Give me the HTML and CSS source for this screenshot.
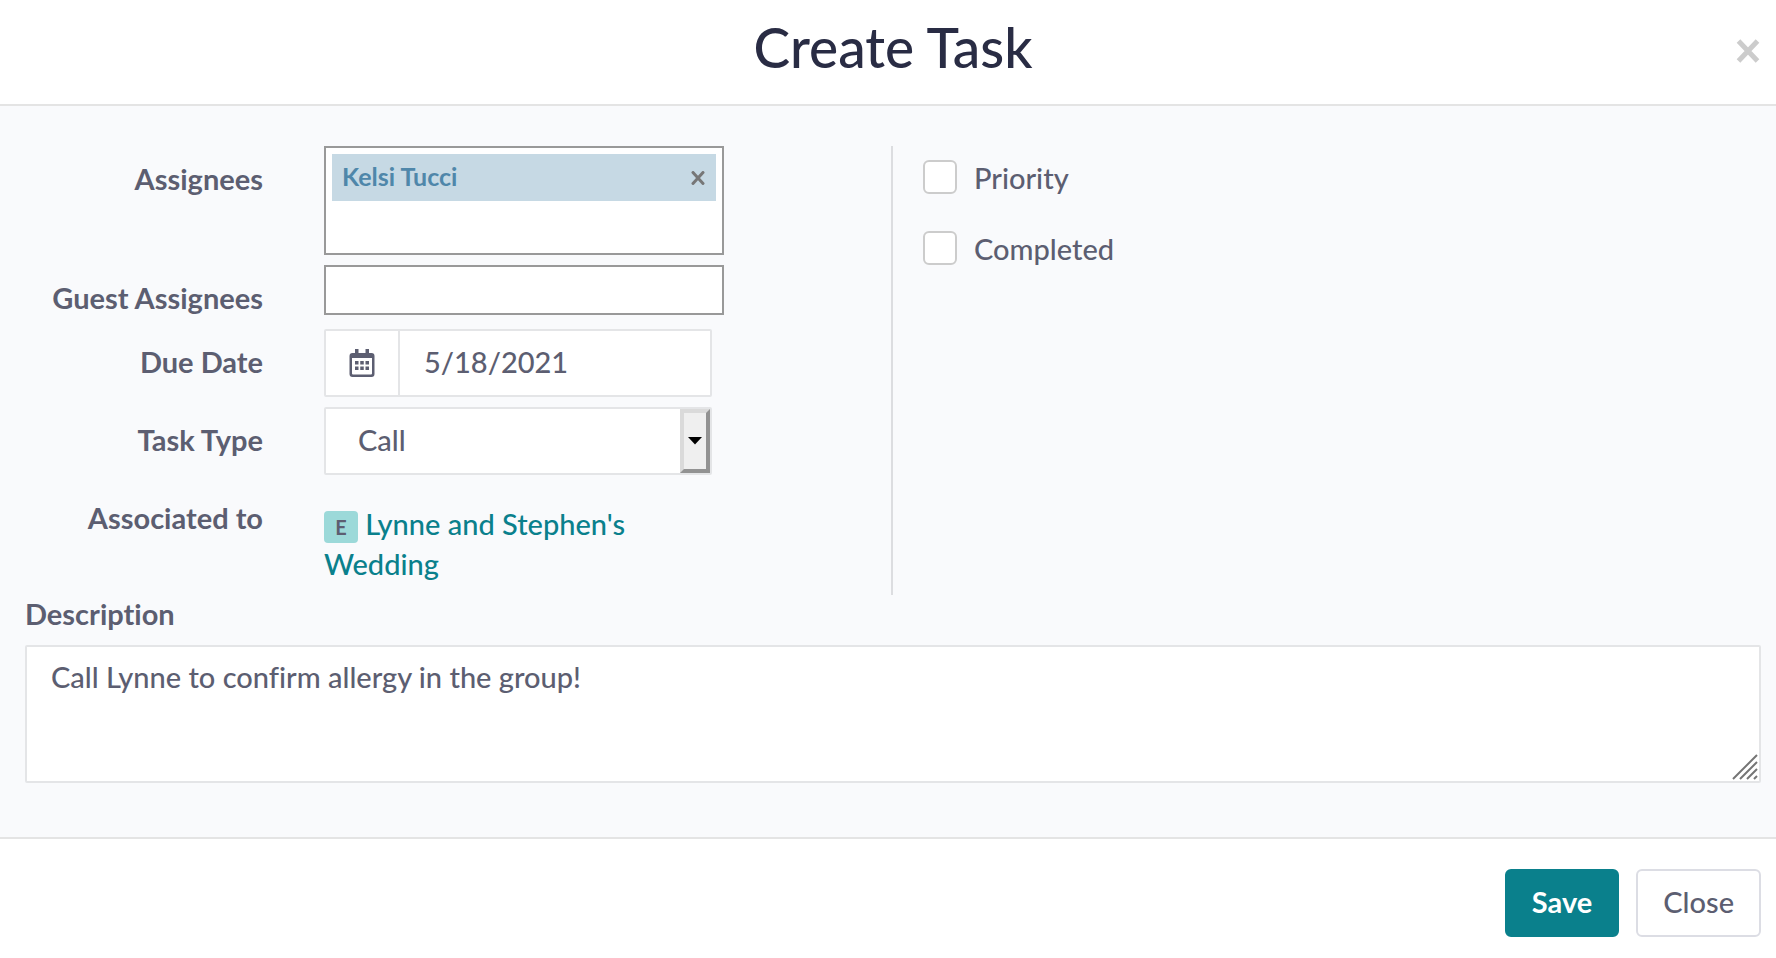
FILE: index.html
```html
<!DOCTYPE html>
<html lang="en">
<head>
    <meta charset="UTF-8">
    <meta name="viewport" content="width=device-width, initial-scale=1.0">
    <title>Create Task</title>
    <link rel="stylesheet" href="styles.css">
</head>
<body>

    <form class="modal">
        <!-- Header -->
        <div class="modal-header">
            <h1>Create Task</h1>
            <button type="button" class="close" aria-label="Dismiss">
                <svg width="24" height="26" viewBox="0 0 24 26"><path d="M2.5 3L21.5 23M21.5 3L2.5 23" stroke="#cccccc" stroke-width="5"/></svg>
            </button>
        </div>

        <!-- Body -->
        <div class="modal-body">
            <div class="columns">
                <div class="fields">
                    <div class="row">
                        <label for="assignees">Assignees</label>
                        <div class="tag-box">
                            <div class="tag">
                                <span>Kelsi Tucci</span>
                                <button type="button" class="tag-remove" aria-label="Remove Kelsi Tucci">
                                    <svg width="14" height="14" viewBox="0 0 14 14"><path d="M2 1.5L12 12.5M12 1.5L2 12.5" stroke="#777777" stroke-width="3" stroke-linecap="round"/></svg>
                                </button>
                            </div>
                            <input type="text" id="assignees" class="tag-input">
                        </div>
                    </div>

                    <div class="row">
                        <label for="guests">Guest Assignees</label>
                        <input type="text" id="guests" class="guest-input">
                    </div>

                    <div class="row">
                        <label for="due-date">Due Date</label>
                        <div class="control">
                            <span class="addon">
                                <svg width="26" height="30" viewBox="0 0 26 30">
                                    <path d="M6 1h3.500v4h7V1H20v4h2.500a3 3 0 0 1 3 3v18a3 3 0 0 1-3 3h-19a3 3 0 0 1-3-3V8a3 3 0 0 1 3-3H6zM3 10v15.500a1 1 0 0 0 1 1h18a1 1 0 0 0 1-1V10z" fill="#5c5e71" fill-rule="evenodd"/>
                                    <path d="M6 13h3.500v3.500H6zM11.250 13h3.500v3.500h-3.500zM16.500 13H20v3.500h-3.500zM6 18.500h3.500V22H6zM11.250 18.500h3.500V22h-3.500zM16.500 18.500H20V22h-3.500z" fill="#5c5e71"/>
                                </svg>
                            </span>
                            <input type="text" id="due-date" class="date-input" value="5/18/2021">
                        </div>
                    </div>

                    <div class="row">
                        <label for="task-type">Task Type</label>
                        <div class="control">
                            <select id="task-type">
                                <option>Call</option>
                            </select>
                            <span class="arrow">
                                <svg width="14" height="8" viewBox="0 0 14 8"><path d="M0 0h14L7 7.500z" fill="#000000"/></svg>
                            </span>
                        </div>
                    </div>

                    <div class="row">
                        <span class="row-title">Associated to</span>
                        <div class="associated">
                            <span class="badge">E</span>
                            <a href="#">Lynne and Stephen's Wedding</a>
                        </div>
                    </div>
                </div>

                <div class="options">
                    <label class="option"><input type="checkbox">Priority</label>
                    <label class="option"><input type="checkbox">Completed</label>
                </div>
            </div>

            <label for="description" class="description-label">Description</label>
            <div class="description">
                <textarea id="description">Call Lynne to confirm allergy in the group!</textarea>
                <svg class="grip" width="26" height="26" viewBox="0 0 26 26"><path d="M1 25L25 1M8 25L25 8M15 25L25 15M22 25L25 22" stroke="#757575" stroke-width="2"/></svg>
            </div>
        </div>

        <!-- Footer -->
        <div class="modal-footer">
            <button type="button" class="btn btn-save">Save</button>
            <button type="button" class="btn btn-close">Close</button>
        </div>
    </form>

</body>
</html>
```
FILE: styles.css
```css
/* General Reset */
* {
    margin: 0;
    padding: 0;
    box-sizing: border-box;
}

body {
    font-family: Lato, "Open Sans", sans-serif;
    font-size: 29px;
    font-weight: 500;
    font-variant-ligatures: none;
    color: #5c5e71;
    background-color: #ffffff;
}

input,
select,
textarea,
button {
    font: inherit;
    font-variant-ligatures: none;
    color: inherit;
    border: none;
    outline: none;
    background: none;
}

button {
    cursor: pointer;
}

svg {
    display: block;
}

.modal {
    display: flex;
    flex-direction: column;
    min-height: 100vh;
}

/* Header */
.modal-header {
    position: relative;
    padding: 12px 15px 22px 25px;
    border-bottom: 2px solid #e4e4e4;
    text-align: center;
}

.modal-header h1 {
    font-size: 55px;
    line-height: 70px;
    font-weight: 500;
    color: #292c44;
}

.close {
    position: absolute;
    top: 38px;
    right: 16px;
}

/* Body */
.modal-body {
    flex: 1;
    padding: 40px 15px 54px 25px;
    background-color: #f9fafc;
}

.columns {
    display: grid;
    grid-template-columns: calc(50% - 2px) 1fr;
}

.fields {
    display: flex;
    flex-direction: column;
    gap: 10px;
    padding-bottom: 11px;
}

.row {
    display: grid;
    grid-template-columns: 238px 400px;
    column-gap: 61px;
    align-items: start;
}

.row > label,
.row-title {
    padding-top: 15px;
    line-height: 36px;
    font-weight: bold;
    text-align: right;
}

.tag-box {
    display: flex;
    flex-direction: column;
    padding: 6px;
    border: 2px solid #999999;
    background-color: #ffffff;
}

.tag {
    display: flex;
    justify-content: space-between;
    align-items: center;
    height: 47px;
    padding: 0 11px 0 10px;
    background-color: #c6d9e4;
    color: #4f87aa;
    font-size: 25px;
    font-weight: bold;
}

.tag span {
    padding-bottom: 4px;
}

.tag-input {
    height: 46px;
}

.guest-input {
    height: 50px;
    margin-bottom: 4px;
    padding: 0 10px;
    border: 2px solid #999999;
    background-color: #ffffff;
}

.control {
    display: flex;
    width: 388px;
    height: 68px;
    border: 2px solid #e4e5e7;
    border-radius: 2px;
    background-color: #ffffff;
}

.addon {
    display: flex;
    justify-content: center;
    align-items: center;
    width: 74px;
    border-right: 2px solid #e4e5e7;
}

.date-input {
    flex: 1;
    min-width: 0;
    padding: 0 0 4px 24px;
}

select {
    flex: 1;
    appearance: none;
    padding: 0 0 4px 32px;
}

.arrow {
    display: flex;
    justify-content: center;
    align-items: center;
    width: 30px;
    border: 4px solid;
    border-color: #dadada #929292 #929292 #dadada;
    background-color: #efefef;
}

.associated {
    width: 340px;
    padding-top: 19px;
    line-height: 40px;
}

.associated a {
    color: #0a808c;
    text-decoration: none;
}

.badge {
    display: inline-block;
    width: 34px;
    border-radius: 4px;
    background-color: #9cd9d9;
    font-size: 20px;
    line-height: 32px;
    font-weight: bold;
    text-align: center;
}

/* Checkboxes */
.options {
    display: flex;
    flex-direction: column;
    align-items: flex-start;
    gap: 35px;
    padding: 14px 0 0 30px;
    border-left: 2px solid #dcdde0;
}

.option {
    display: flex;
    align-items: flex-start;
    gap: 17px;
    line-height: 36px;
}

.option input {
    appearance: none;
    width: 34px;
    height: 34px;
    border: 2px solid #cccccc;
    border-radius: 6px;
    background-color: #ffffff;
}

.option input:checked {
    background-color: #0a808c;
}

/* Description */
.description-label {
    display: block;
    padding-bottom: 12px;
    line-height: 38px;
    font-weight: bold;
}

.description {
    position: relative;
}

textarea {
    display: block;
    width: 100%;
    height: 138px;
    padding: 12px 24px;
    border: 2px solid #e4e5e7;
    border-radius: 2px;
    background-color: #ffffff;
    line-height: 36px;
    resize: none;
}

.grip {
    position: absolute;
    right: 3px;
    bottom: 3px;
}

/* Footer */
.modal-footer {
    display: flex;
    justify-content: flex-end;
    gap: 17px;
    padding: 30px 15px 21px;
    border-top: 2px solid #e4e4e4;
}

.btn {
    height: 68px;
    padding: 0 25px 4px;
    border: 2px solid #dcdde4;
    border-radius: 6px;
}

.btn-save {
    border-color: #0a808c;
    background-color: #0a808c;
    color: #ffffff;
    font-weight: bold;
}
```
